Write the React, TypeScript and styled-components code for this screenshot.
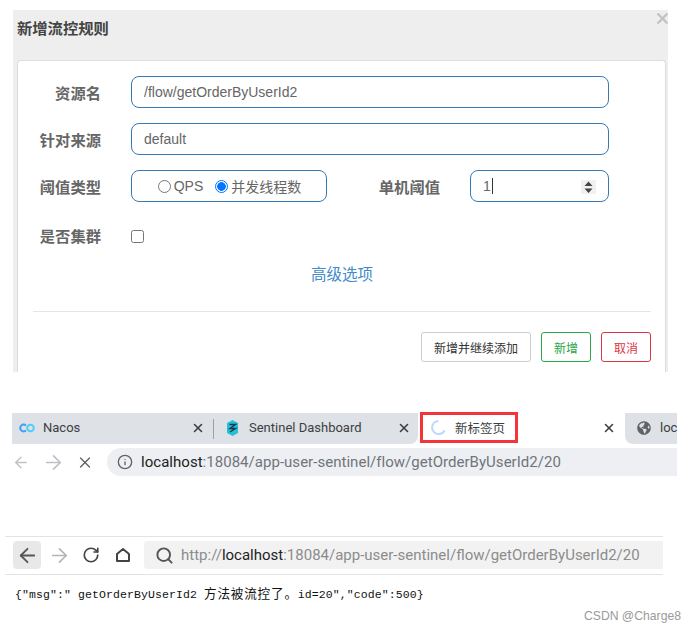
import React from "react";
import styled, { createGlobalStyle } from "styled-components";
import { ArrowLeft, ArrowRight, RotateCw, Search, X, Info } from "lucide-react";
import { FaGlobeAmericas } from "react-icons/fa";

const Global = createGlobalStyle`
  html, body { margin: 0; padding: 0; background: #fff; }
  body { font-family: "Liberation Sans", "Noto Sans CJK SC", sans-serif; width: 696px; height: 632px; overflow: hidden; }
`;

const Page = styled.div`
  width: 696px;
  height: 632px;
  padding-top: 10px;
  box-sizing: border-box;
  overflow: hidden;
  display: flex;
  flex-direction: column;
`;

const Dialog = styled.section`
  position: relative;
  width: 655px;
  height: 362px;
  margin-left: 13px;
  background: #eeeeee;
  overflow: hidden;
  flex: none;
`;

const Title = styled.h4`
  margin: 0;
  height: 50px;
  padding: 9px 0 0 4px;
  box-sizing: border-box;
  font-size: 15.3px;
  line-height: 20px;
  font-weight: 700;
  color: #444;
`;

const Close = styled(X).attrs({ size: 17, strokeWidth: 3.4, color: "#c2c2c2" })`
  position: absolute;
  right: -3px;
  top: 0;
`;

const Card = styled.div`
  margin: 0 2px 0 4px;
  height: 312px;
  background: #fff;
  border: 1px solid #ddd;
  border-bottom: none;
  border-radius: 4px 4px 0 0;
  box-sizing: border-box;
  padding: 15px 14px 0 15px;
`;

const Row = styled.div<{ $mb?: number }>`
  display: flex;
  align-items: center;
  height: 32px;
  margin-bottom: ${(p) => p.$mb ?? 15}px;
`;

const Label = styled.label<{ $w?: number }>`
  width: ${(p) => p.$w ?? 68}px;
  flex: none;
  text-align: right;
  font-size: 15.3px;
  font-weight: 700;
  color: #666;
`;

const Field = styled.div<{ $w: number; $ml?: number }>`
  width: ${(p) => p.$w}px;
  height: 32px;
  margin-left: ${(p) => p.$ml ?? 30}px;
  box-sizing: border-box;
  border: 1px solid #337ab7;
  border-radius: 8px;
  display: flex;
  align-items: center;
  padding: 0 12px;
  font-size: 14px;
  color: #666;
  flex: none;
  position: relative;
`;

const RadioField = styled(Field)`
  justify-content: center;
  gap: 12px;
  padding: 0 0 0 1px;
  font-size: 14px;
`;

const RadioLabel = styled.span`
  display: inline-flex;
  align-items: center;
  gap: 3px;
  color: #666;
`;

const RadioDot = styled.i<{ $on?: boolean }>`
  width: 13px;
  height: 13px;
  box-sizing: border-box;
  border-radius: 50%;
  border: 1px solid ${(p) => (p.$on ? "#0075ff" : "#767676")};
  background: ${(p) => (p.$on ? "radial-gradient(circle, #0075ff 0 4px, #fff 4.6px)" : "#fff")};
  display: block;
`;

const Caret = styled.i`
  width: 1px;
  height: 16px;
  background: #333;
  display: block;
  margin-left: 1px;
`;

const Spinner = styled.div`
  position: absolute;
  right: 12px;
  top: 9px;
  width: 15px;
  height: 14px;
  background: #f0f0f0;
`;

const Check = styled.i`
  width: 13px;
  height: 13px;
  box-sizing: border-box;
  margin-left: 30px;
  margin-top: 2px;
  border: 1px solid #767676;
  border-radius: 2.5px;
  display: block;
`;

const AdvancedLink = styled.a`
  display: block;
  text-align: center;
  color: #428bca;
  font-size: 15.5px;
  line-height: 20px;
  margin-top: -1px;
`;

const Divider = styled.hr`
  border: none;
  border-top: 1px solid #e5e5e5;
  margin: 26px 0 20px;
`;

const Footer = styled.div`
  display: flex;
  justify-content: flex-end;
  gap: 10px;
`;

const Btn = styled.button<{ $c: string; $t: string; $w: number }>`
  width: ${(p) => p.$w}px;
  height: 30px;
  padding: 0;
  background: #fff;
  border: 1px solid ${(p) => p.$c};
  color: ${(p) => p.$t};
  border-radius: 3px;
  font-family: inherit;
  font-size: 12px;
`;

const TabStrip = styled.div`
  margin: 41px 0 0 12px;
  width: 665px;
  height: 31px;
  display: flex;
  flex: none;
  font-family: "Roboto", "Noto Sans CJK SC", sans-serif;
  font-size: 13px;
  color: #3c4043;
`;

const Tab = styled.div<{ $w: number; $active?: boolean; $pad?: number; $corner?: string }>`
  width: ${(p) => p.$w}px;
  flex: none;
  box-sizing: border-box;
  display: flex;
  align-items: center;
  padding: 0 0 2px ${(p) => p.$pad ?? 7}px;
  position: relative;
  background: ${(p) => (p.$active ? "#fff" : "#dee1e6")};
  border-radius: ${(p) => p.$corner ?? "0"};
`;

const TabTitle = styled.span<{ $ml?: number; $size?: number }>`
  margin-left: ${(p) => p.$ml ?? 8}px;
  flex: 1;
  white-space: nowrap;
  font-size: ${(p) => p.$size ?? 13}px;
`;

const TabSep = styled.span`
  width: 1px;
  flex: none;
  background: #dee1e6;
  display: flex;
  align-items: center;
  &::after {
    content: "";
    width: 1px;
    height: 20px;
    background: #9aa0a6;
  }
`;

const TabClose = styled(X).attrs({ size: 14, strokeWidth: 2.8, color: "#3c4043" })<{ $mr?: number }>`
  flex: none;
  margin-right: ${(p) => p.$mr ?? 8}px;
`;

const Highlight = styled.div`
  position: absolute;
  left: 2px;
  top: -1px;
  width: 98px;
  height: 31px;
  box-sizing: border-box;
  border: 3px solid #f5343a;
`;

const AddressRow = styled.div`
  margin: 4px 0 0 12px;
  width: 665px;
  height: 28px;
  display: flex;
  align-items: center;
  flex: none;
`;

const NavIcon = styled.span<{ $w: number }>`
  width: ${(p) => p.$w}px;
  height: 28px;
  flex: none;
  display: flex;
  align-items: center;
  justify-content: center;
`;

const Pill = styled.div`
  flex: 1;
  height: 28px;
  background: #edeff2;
  border-radius: 14px 0 0 14px;
  display: flex;
  align-items: center;
  padding-left: 10px;
  gap: 8px;
  font-family: "Roboto", sans-serif;
  font-size: 15px;
  letter-spacing: 0.03px;
  color: #70757a;
  white-space: nowrap;
`;

const Host = styled.span`
  color: #202124;
`;

const Toolbar = styled.div`
  margin: 60px 0 0 5px;
  width: 658px;
  height: 39px;
  box-sizing: border-box;
  border-top: 1px solid #e3e3e3;
  border-bottom: 1px solid #e3e3e3;
  padding: 4px 0 5px 8px;
  display: flex;
  align-items: center;
  flex: none;
`;

const BackBtn = styled.span`
  width: 28px;
  height: 28px;
  flex: none;
  border-radius: 4px;
  background: #e8e8e8;
  display: flex;
  align-items: center;
  justify-content: center;
`;

const UrlBox = styled.div`
  flex: 1;
  height: 28px;
  margin-left: 2px;
  background: #f2f2f2;
  border-radius: 4px 0 0 4px;
  display: flex;
  align-items: center;
  padding-left: 11px;
  gap: 7px;
  font-family: "Roboto", sans-serif;
  font-size: 15px;
  color: #8c8c8c;
  white-space: nowrap;
`;

const Strong = styled.span`
  color: #222;
`;

const Json = styled.pre`
  margin: 11px 0 0 15px;
  height: 16px;
  font-family: "Liberation Mono", "Noto Sans CJK SC", monospace;
  font-size: 11.5px;
  letter-spacing: 0.1px;
  line-height: 16px;
  color: #111;
  flex: none;
`;

const Cjk = styled.span`
  font-family: "Noto Sans CJK SC", sans-serif;
  font-size: 12.6px;
  letter-spacing: 0.8px;
  line-height: 14px;
`;

const Watermark = styled.div`
  margin: 6px 15px 0 0;
  text-align: right;
  font-size: 12.2px;
  line-height: 16px;
  color: #9a9a9a;
`;

const Nacos = () => (
  <svg width="16" height="10" viewBox="0 0 16 10" fill="none" strokeWidth="2">
    <path d="M7 2.600A3.400 3.400 0 1 0 7 7.400" stroke="#3f9ff2" />
    <circle cx="11.500" cy="5" r="3.300" stroke="#52cdfa" />
  </svg>
);

const Sentinel = () => (
  <svg width="13" height="16" viewBox="0 0 13 16">
    <path d="M6.500 0l5.500 3v10l-5.500 3L1 13V3z" fill="#26c0d8" />
    <path d="M3.500 4.500h6L4 8.500h5.500L4 12" stroke="#12384a" strokeWidth="1.400" fill="none" />
  </svg>
);

const Loader = () => (
  <svg width="15" height="15" viewBox="0 0 16 16" fill="none">
    <path d="M8 1.200A6.800 6.800 0 0 0 3 12.600 6.800 6.800 0 0 0 14.400 11" stroke="#bcd6fb" strokeWidth="2" />
  </svg>
);

const SpinArrows = () => (
  <svg width="15" height="14" viewBox="0 0 15 14">
    <path d="M7.500 1.500L11.500 6h-8zM7.500 13L3.500 8.500h8z" fill="#444" />
  </svg>
);

const HomeIcon = () => (
  <svg width="16" height="16" viewBox="0 0 16 16" fill="none" stroke="#444" strokeWidth="2" strokeLinejoin="round">
    <path d="M8 2l6 5v7H2V7z" />
  </svg>
);

export default function App() {
  return (
    <>
      <Global />
      <Page>
        <Dialog>
          <Title>新增流控规则</Title>
          <Close />
          <Card>
            <Row>
              <Label>资源名</Label>
              <Field $w={478}>/flow/getOrderByUserId2</Field>
            </Row>
            <Row>
              <Label>针对来源</Label>
              <Field $w={478}>default</Field>
            </Row>
            <Row $mb={17}>
              <Label>阈值类型</Label>
              <RadioField $w={196}>
                <RadioLabel><RadioDot />QPS</RadioLabel>
                <RadioLabel><RadioDot $on />并发线程数</RadioLabel>
              </RadioField>
              <Label $w={113}>单机阈值</Label>
              <Field $w={139}>
                1<Caret />
                <Spinner><SpinArrows /></Spinner>
              </Field>
            </Row>
            <Row>
              <Label>是否集群</Label>
              <Check />
            </Row>
            <AdvancedLink>高级选项</AdvancedLink>
            <Divider />
            <Footer>
              <Btn $w={110} $c="#ccc" $t="#333">新增并继续添加</Btn>
              <Btn $w={50} $c="#28a745" $t="#28a745">新增</Btn>
              <Btn $w={50} $c="#dc3545" $t="#dc3545">取消</Btn>
            </Footer>
          </Card>
        </Dialog>

        <TabStrip>
          <Tab $w={201}>
            <Nacos />
            <TabTitle>Nacos</TabTitle>
            <TabClose />
          </Tab>
          <TabSep />
          <Tab $w={204} $pad={12} $corner="0 0 8px 0">
            <Sentinel />
            <TabTitle $ml={10}>Sentinel Dashboard</TabTitle>
            <TabClose $mr={7} />
          </Tab>
          <Tab $w={207} $active $pad={13}>
            <Loader />
            <TabTitle $ml={9} $size={12.5}>新标签页</TabTitle>
            <TabClose $mr={9} />
            <Highlight />
          </Tab>
          <Tab $w={52} $pad={12} $corner="0 0 0 8px">
            <FaGlobeAmericas size={14} color="#5f6368" style={{ flex: "none" }} />
            <TabTitle $ml={9}>loc</TabTitle>
          </Tab>
        </TabStrip>

        <AddressRow>
          <NavIcon $w={18}><ArrowLeft size={23} color="#bdc1c6" strokeWidth={1.8} /></NavIcon>
          <NavIcon $w={46}><ArrowRight size={23} color="#bdc1c6" strokeWidth={1.8} /></NavIcon>
          <NavIcon $w={18}><X size={23} color="#5f6368" strokeWidth={1.8} /></NavIcon>
          <NavIcon $w={13} />
          <Pill>
            <Info size={16} color="#5f6368" strokeWidth={2} />
            <span><Host>localhost</Host>:18084/app-user-sentinel/flow/getOrderByUserId2/20</span>
          </Pill>
        </AddressRow>

        <Toolbar>
          <BackBtn><ArrowLeft size={23} color="#555" strokeWidth={1.9} /></BackBtn>
          <NavIcon $w={37}><ArrowRight size={23} color="#b5b5b5" strokeWidth={1.8} /></NavIcon>
          <NavIcon $w={26}><RotateCw size={18} color="#444" strokeWidth={2.2} /></NavIcon>
          <NavIcon $w={38}><HomeIcon /></NavIcon>
          <UrlBox>
            <Search size={19} color="#555" strokeWidth={2.4} />
            <span>http://<Strong>localhost</Strong>:18084/app-user-sentinel/flow/getOrderByUserId2/20</span>
          </UrlBox>
        </Toolbar>

        <Json>{'{"msg":" getOrderByUserId2 '}<Cjk>方法被流控了。</Cjk>{'id=20","code":500}'}</Json>
        <Watermark>CSDN @Charge8</Watermark>
      </Page>
    </>
  );
}
